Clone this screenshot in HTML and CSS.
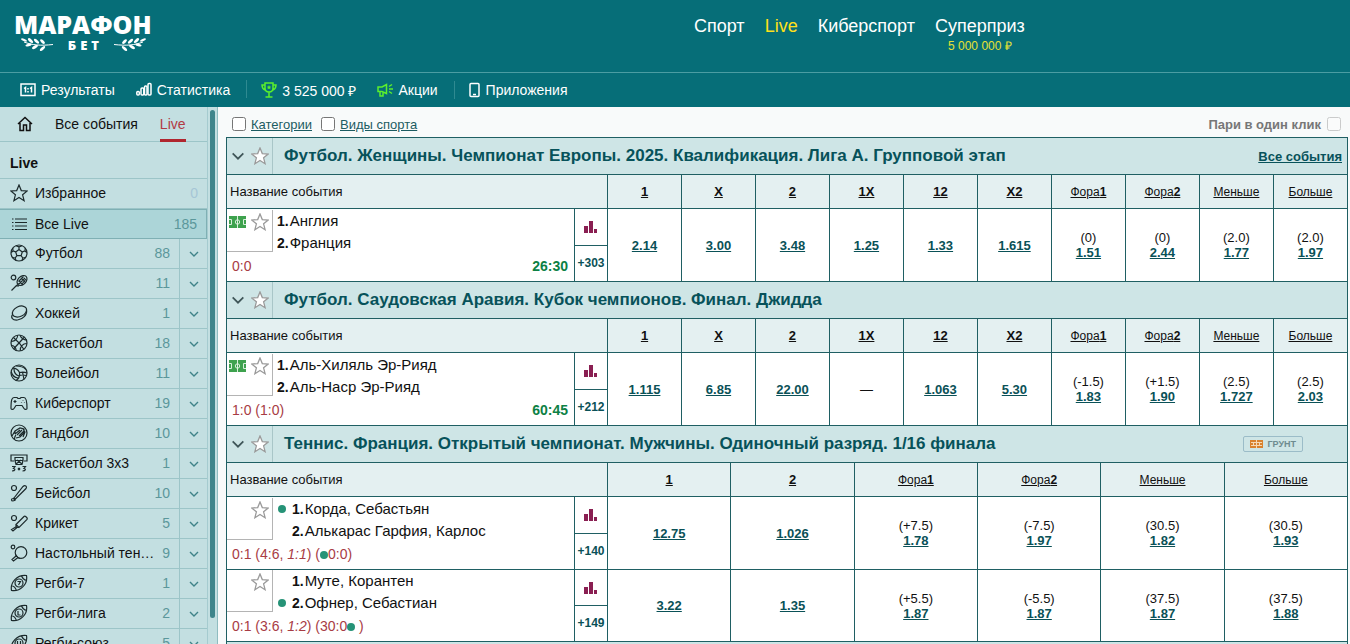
FILE: index.html
```html
<!DOCTYPE html>
<html lang="ru">
<head>
<meta charset="utf-8">
<title>Марафонбет — Live</title>
<link rel="stylesheet" href="styles.css">
</head>
<body>
<svg class="sprite" aria-hidden="true">
  <symbol id="chev" viewBox="0 0 12 12"><path d="M2 4l4 4 4-4"/></symbol>
  <symbol id="star" viewBox="0 0 18 18"><path d="M9 1l2.300 5.600 5.900.4-4.600 3.800 1.500 5.900L9 13.500l-5.100 3.200 1.500-5.900L.8 7l5.900-.4z"/></symbol>
  <symbol id="bars" viewBox="0 0 14 12"><path d="M0 5h4v7H0zM5 0h4v12H5zM10 8h3v4h-3z"/></symbol>
  <symbol id="pitch" viewBox="0 0 17 12"><path class="grass" d="M0 0h17v12H0z"/><path d="M8.500 0v12M0 3.500h2.500v5H0M17 3.500h-2.500v5H17"/><circle cx="8.500" cy="6" r="2.200"/></symbol>
  <symbol id="rugby" viewBox="0 0 18 18"><path d="M1.500 16.500C0 8.500 7 .5 16.500 1.500 18 10.500 10 18 1.500 16.500zM1.300 11.500c2.500.5 4.200 2 5.200 5.300M11.300 1.300c1 3 2.800 4.700 5.300 5.200"/><circle cx="9" cy="9" r="4"/></symbol>
  <symbol id="laurel" viewBox="0 0 32 14">
    <path class="stem" d="M3 4c8 3 16 4 29 2.500"/>
    <ellipse cx="3" cy="2" rx="3.200" ry="1.200" transform="rotate(25 3 2)"/>
    <ellipse cx="9.500" cy="2.600" rx="3.200" ry="1.400" transform="rotate(42 9.500 2.600)"/>
    <ellipse cx="15.500" cy="3.200" rx="3.200" ry="1.400" transform="rotate(42 15.500 3.200)"/>
    <ellipse cx="21.500" cy="3.600" rx="3" ry="1.400" transform="rotate(42 21.500 3.600)"/>
    <ellipse cx="7.500" cy="7" rx="3.200" ry="1.300" transform="rotate(-15 7.500 7)"/>
    <ellipse cx="14" cy="9" rx="3.300" ry="1.400" transform="rotate(-32 14 9)"/>
    <ellipse cx="21.500" cy="10.500" rx="3.300" ry="1.400" transform="rotate(-42 21.500 10.500)"/>
  </symbol>
</svg>

<header class="header">
  <div class="header-top">
    <a class="logo" href="#">
      <span class="logo-name">МАРАФОН</span>
      <span class="logo-row"><svg class="laurel"><use href="#laurel"/></svg><span class="logo-bet">БЕТ</span><svg class="laurel flip"><use href="#laurel"/></svg></span>
    </a>
    <nav class="nav">
      <a href="#">Спорт</a>
      <a class="current" href="#">Live</a>
      <a href="#">Киберспорт</a>
      <a class="prize" href="#">Суперприз<small>5 000 000 ₽</small></a>
    </nav>
  </div>
  <nav class="subnav">
    <a href="#"><svg class="ico" viewBox="0 0 16 16"><path d="M1 2h14v11.500H1zM4 6.500l1.500-1v5M10 6.500l1.500-1v5M8 6v1.500M8 9v1.500"/></svg>Результаты</a>
    <a href="#"><svg class="ico" viewBox="0 0 16 16"><rect x=".8" y="9.500" width="2.500" height="3.500" rx="1"/><rect x="5" y="6" width="2.800" height="7" rx="1"/><rect x="8.500" y="4" width="2.500" height="9" rx="1"/><rect x="12" y="1.500" width="3" height="11.500" rx="1"/></svg>Статистика</a>
    <a class="split green" href="#"><svg class="ico" viewBox="0 0 16 16"><path d="M4 1h8v5c0 3-2 4-4 4S4 9 4 6zM4 3H1c0 3 1 4 3 5M12 3h3c0 3-1 4-3 5M8 10v5M4.500 15h7"/><path class="solid" d="M8 3l.7 1.500 1.500.2-1.100 1 .3 1.600L8 6.500l-1.400.8.3-1.600-1.100-1 1.500-.2z"/></svg><span>3 525 000 ₽</span></a>
    <a class="green" href="#"><svg class="ico" viewBox="0 0 16 16"><path d="M1 5h4l4.500-2.500v9L5 9.500H1zM3 9.500V14h3V9.500M12 4.500l3-2M12 7h4M12 9.500l3 2"/></svg><span>Акции</span></a>
    <a class="split" href="#"><svg class="ico phone" viewBox="0 0 12 16"><rect x="1" y="1.500" width="9" height="13" rx="1"/><path d="M4 12.500h3"/></svg>Приложения</a>
  </nav>
</header>

<div class="body">
  <aside class="sidebar">
    <div class="side-main">
      <div class="tabs">
        <a class="home" href="#" aria-label="Главная"><svg viewBox="0 0 16 16"><path d="M1 8l7-6.500L15 8M3 7v7.500h3.500V9h3v5.500H13V7"/></svg></a>
        <a href="#">Все события</a>
        <a class="on" href="#">Live</a>
      </div>
      <h2 class="side-title">Live</h2>
      <ul class="sports">
        <li><a class="sport" href="#"><svg viewBox="0 0 18 18"><use href="#star"/></svg><span>Избранное</span><b class="zero">0</b></a></li>
        <li class="active"><a class="sport" href="#"><svg viewBox="0 0 18 18"><path d="M5 4h12M5 7.500h12M5 11h12M5 14.500h12M2 4h1.500M2 7.500h1.500M2 11h1.500M2 14.500h1.500"/></svg><span>Все Live</span><b>185</b></a></li>
        <li><a class="sport" href="#"><svg viewBox="0 0 18 18"><circle cx="9" cy="9" r="8"/><path d="M9 5.500l3.300 2.400-1.200 3.800H6.900L5.700 7.900zM9 5.500V3L6 1.600M9 3l3-1.400M12.300 7.900L15 7l1.800 1.500M15 7l.3-3M11.100 11.700l1.700 2.300-.7 2.200M12.800 14l2.600-.5M6.900 11.700L5.200 14l.7 2.200M5.200 14l-2.600-.5M5.700 7.900L3 7 1.200 8.500M3 7l-.3-3"/></svg><span>Футбол</span><b>88</b></a><button aria-label="Раскрыть"><svg><use href="#chev"/></svg></button></li>
        <li><a class="sport" href="#"><svg viewBox="0 0 18 18"><circle cx="3.500" cy="3.500" r="2.300"/><ellipse cx="12" cy="6.500" rx="5.800" ry="4" transform="rotate(-45 12 6.500)"/><path d="M8 9v3M6 12h3M7 11l-5.500 5.500M9 7l4 4M11 4l4 4M9 10l6-6M12 10l4-5M8.500 7.500l5-5"/></svg><span>Теннис</span><b>11</b></a><button aria-label="Раскрыть"><svg><use href="#chev"/></svg></button></li>
        <li><a class="sport" href="#"><svg viewBox="0 0 18 18"><ellipse cx="9.500" cy="7.500" rx="7.500" ry="5" transform="rotate(-25 9.500 7.500)"/><path d="M2.500 10.500c-2 3 0 6 5 5.500 5-.5 10-5 9-10.500"/></svg><span>Хоккей</span><b>1</b></a><button aria-label="Раскрыть"><svg><use href="#chev"/></svg></button></li>
        <li><a class="sport" href="#"><svg viewBox="0 0 18 18"><circle cx="9" cy="9" r="8"/><path d="M3.500 15L14.500 3M3.500 3.500c3 2.500 8 8 10.500 12M7.500 1.200c.5 3-2 6-6.300 6.300M16.800 9.500c-4 0-7 3-6.500 7.300M10 1.200c1 2.500 3.500 4.500 7 5M1.300 11.500c2.500 0 4.500 2 5 5"/></svg><span>Баскетбол</span><b>18</b></a><button aria-label="Раскрыть"><svg><use href="#chev"/></svg></button></li>
        <li><a class="sport" href="#"><svg viewBox="0 0 18 18"><circle cx="9" cy="9" r="8"/><path d="M9.500 8.500C8 5.500 5.500 4.200 2.800 4.200M9.500 8.500c3-.8 5.500-.5 7.500.5M9.500 8.500c.5 3.500-1 6.500-3.500 8M6 2c4 0 8 1.500 10 3.500M1.300 8c1 3.500 3.500 5.500 6.700 6M4 5c0 3.500 1.800 6 5 7M9.300 11.500c2.500-.8 5-.5 7 0M12.500 8l1.500 7.500"/></svg><span>Волейбол</span><b>11</b></a><button aria-label="Раскрыть"><svg><use href="#chev"/></svg></button></li>
        <li><a class="sport" href="#"><svg viewBox="0 0 18 18"><path d="M4 3.500h3l1 1h2l1-1h3c2 0 3 2 3 11 0 1-2 1.500-3 0l-2-3H6l-2 3c-1 1.500-3 1-3 0 0-9 1-11 3-11zM5 6v3M3.500 7.500h3M13 6v.5M11.500 8v.5M14.500 8v.5"/></svg><span>Киберспорт</span><b>19</b></a><button aria-label="Раскрыть"><svg><use href="#chev"/></svg></button></li>
        <li><a class="sport" href="#"><svg viewBox="0 0 18 18"><circle cx="9" cy="9" r="8"/><path d="M2 12l3-5 5-3 4 1v4L10 13l-4 1M5 10l5-4M7 11l5-5M9 12l5-5M5 7v3M4.500 15c0-2 .5-3 1.500-4M13 5l2 3-2 5"/></svg><span>Гандбол</span><b>10</b></a><button aria-label="Раскрыть"><svg><use href="#chev"/></svg></button></li>
        <li><a class="sport" href="#"><svg viewBox="0 0 18 18"><path d="M4 7H1V1h16v6h-3M5 3.500h8v3H5zM5 6.500l1 4h6l1-4M6 10l5-4M12 10L7 6M2 12.500h3l-1.500 2c2 0 2 2.500-1.500 2.500M12.500 12.500h3l-1.500 2c2 0 2 2.500-1.500 2.500M8 14l2 2M10 14l-2 2"/></svg><span>Баскетбол 3x3</span><b>1</b></a><button aria-label="Раскрыть"><svg><use href="#chev"/></svg></button></li>
        <li><a class="sport" href="#"><svg viewBox="0 0 18 18"><circle cx="4" cy="4" r="2.500"/><path d="M4 14L13 2.500c2-2 4.500 0 3 2L5.500 15zM3 14l2.500 2.500M3 14.500c-2 0-2 2.500 0 2.500 1 0 1.500-.5 1.500-1.500"/></svg><span>Бейсбол</span><b>10</b></a><button aria-label="Раскрыть"><svg><use href="#chev"/></svg></button></li>
        <li><a class="sport" href="#"><svg viewBox="0 0 18 18"><circle cx="4" cy="4" r="2.500"/><path d="M6 10.500l8-8c1-1 4 1.500 3 2.800l-8 8.200zM6 10.500v2l1 1h2M6.500 12.500l-5 3 1.500 1.500 4-3.500"/></svg><span>Крикет</span><b>5</b></a><button aria-label="Раскрыть"><svg><use href="#chev"/></svg></button></li>
        <li><a class="sport" href="#"><svg viewBox="0 0 18 18"><circle cx="3" cy="3" r="1.800"/><circle cx="11" cy="8.500" r="5.800"/><path d="M5.500 10.500c1 2 2.500 3.500 4.500 4M6 12l-4 3.500L3.500 17l4.500-3.500"/></svg><span>Настольный тен…</span><b>9</b></a><button aria-label="Раскрыть"><svg><use href="#chev"/></svg></button></li>
        <li><a class="sport" href="#"><svg viewBox="0 0 18 18"><use href="#rugby"/><path d="M7.500 7.500h3l-2 3.500"/></svg><span>Регби-7</span><b>1</b></a><button aria-label="Раскрыть"><svg><use href="#chev"/></svg></button></li>
        <li><a class="sport" href="#"><svg viewBox="0 0 18 18"><use href="#rugby"/><path d="M8 7v4h2.500"/></svg><span>Регби-лига</span><b>2</b></a><button aria-label="Раскрыть"><svg><use href="#chev"/></svg></button></li>
        <li><a class="sport" href="#"><svg viewBox="0 0 18 18"><use href="#rugby"/><path d="M7.500 7v3l1.500 1 1.500-1V7"/></svg><span>Регби-союз</span><b>5</b></a><button aria-label="Раскрыть"><svg><use href="#chev"/></svg></button></li>
      </ul>
    </div>
    <div class="track"><div class="thumb"></div></div>
  </aside>

  <main class="main">
    <div class="filters">
      <input type="checkbox" id="f-cat"><label for="f-cat">Категории</label>
      <input type="checkbox" id="f-kind"><label for="f-kind">Виды спорта</label>
      <label class="oneclick" for="f-one">Пари в один клик</label><input class="dim" type="checkbox" id="f-one">
    </div>

    <section class="group">
      <div class="group-head">
        <div class="group-tools"><svg class="fold"><use href="#chev"/></svg><svg class="fav"><use href="#star"/></svg></div>
        <h3>Футбол. Женщины. Чемпионат Европы. 2025. Квалификация. Лига А. Групповой этап</h3>
        <a class="all" href="#">Все события</a>
      </div>
      <table>
        <colgroup><col class="c-name"><col class="c-stat"><col span="10"></colgroup>
        <tr><th class="left" colspan="2">Название события</th><th><b>1</b></th><th><b>X</b></th><th><b>2</b></th><th><b>1X</b></th><th><b>12</b></th><th><b>X2</b></th><th><u>Фора<b>1</b></u></th><th><u>Фора<b>2</b></u></th><th><u>Меньше</u></th><th><u>Больше</u></th></tr>
        <tr>
          <td><div class="event"><div class="mark"><svg class="pitch"><use href="#pitch"/></svg><svg class="fav"><use href="#star"/></svg></div><div class="teams"><div><b>1.</b>Англия</div><div><b>2.</b>Франция</div></div><div class="score"><span>0:0</span><time>26:30</time></div></div></td>
          <td><div class="stat"><a href="#" aria-label="Статистика"><svg><use href="#bars"/></svg></a><a href="#">+303</a></div></td>
          <td><a href="#">2.14</a></td><td><a href="#">3.00</a></td><td><a href="#">3.48</a></td><td><a href="#">1.25</a></td><td><a href="#">1.33</a></td><td><a href="#">1.615</a></td><td>(0)<br><a href="#">1.51</a></td><td>(0)<br><a href="#">2.44</a></td><td>(2.0)<br><a href="#">1.77</a></td><td>(2.0)<br><a href="#">1.97</a></td>
        </tr>
      </table>
    </section>

    <section class="group">
      <div class="group-head">
        <div class="group-tools"><svg class="fold"><use href="#chev"/></svg><svg class="fav"><use href="#star"/></svg></div>
        <h3>Футбол. Саудовская Аравия. Кубок чемпионов. Финал. Джидда</h3>
      </div>
      <table>
        <colgroup><col class="c-name"><col class="c-stat"><col span="10"></colgroup>
        <tr><th class="left" colspan="2">Название события</th><th><b>1</b></th><th><b>X</b></th><th><b>2</b></th><th><b>1X</b></th><th><b>12</b></th><th><b>X2</b></th><th><u>Фора<b>1</b></u></th><th><u>Фора<b>2</b></u></th><th><u>Меньше</u></th><th><u>Больше</u></th></tr>
        <tr>
          <td><div class="event"><div class="mark"><svg class="pitch"><use href="#pitch"/></svg><svg class="fav"><use href="#star"/></svg></div><div class="teams"><div><b>1.</b>Аль-Хиляль Эр-Рияд</div><div><b>2.</b>Аль-Наср Эр-Рияд</div></div><div class="score"><span>1:0 (1:0)</span><time>60:45</time></div></div></td>
          <td><div class="stat"><a href="#" aria-label="Статистика"><svg><use href="#bars"/></svg></a><a href="#">+212</a></div></td>
          <td><a href="#">1.115</a></td><td><a href="#">6.85</a></td><td><a href="#">22.00</a></td><td>—</td><td><a href="#">1.063</a></td><td><a href="#">5.30</a></td><td>(-1.5)<br><a href="#">1.83</a></td><td>(+1.5)<br><a href="#">1.90</a></td><td>(2.5)<br><a href="#">1.727</a></td><td>(2.5)<br><a href="#">2.03</a></td>
        </tr>
      </table>
    </section>

    <section class="group">
      <div class="group-head">
        <div class="group-tools"><svg class="fold"><use href="#chev"/></svg><svg class="fav"><use href="#star"/></svg></div>
        <h3>Теннис. Франция. Открытый чемпионат. Мужчины. Одиночный разряд. 1/16 финала</h3>
        <span class="surface"><svg viewBox="0 0 13 8"><path class="clay" d="M0 0h13v8H0z"/><path d="M1 2.500h11M1 5.500h11M6.500 0v8M3.500 2.500v3M9.500 2.500v3"/></svg>ГРУНТ</span>
      </div>
      <table>
        <colgroup><col class="c-name"><col class="c-stat"><col span="6"></colgroup>
        <tr><th class="left" colspan="2">Название события</th><th><b>1</b></th><th><b>2</b></th><th><u>Фора<b>1</b></u></th><th><u>Фора<b>2</b></u></th><th><u>Меньше</u></th><th><u>Больше</u></th></tr>
        <tr>
          <td><div class="event"><div class="mark"><svg class="fav"><use href="#star"/></svg></div><div class="teams serve"><div><i class="dot"></i><b>1.</b>Корда, Себастьян</div><div><i class="dot off"></i><b>2.</b>Алькарас Гарфия, Карлос</div></div><div class="score"><span>0:1 (4:6, <em>1:1</em>) (<i class="dot"></i>0:0)</span></div></div></td>
          <td><div class="stat"><a href="#" aria-label="Статистика"><svg><use href="#bars"/></svg></a><a href="#">+140</a></div></td>
          <td><a href="#">12.75</a></td><td><a href="#">1.026</a></td><td>(+7.5)<br><a href="#">1.78</a></td><td>(-7.5)<br><a href="#">1.97</a></td><td>(30.5)<br><a href="#">1.82</a></td><td>(30.5)<br><a href="#">1.93</a></td>
        </tr>
        <tr>
          <td><div class="event"><div class="mark"><svg class="fav"><use href="#star"/></svg></div><div class="teams serve"><div><i class="dot off"></i><b>1.</b>Муте, Корантен</div><div><i class="dot"></i><b>2.</b>Офнер, Себастиан</div></div><div class="score"><span>0:1 (3:6, <em>1:2</em>) (30:0<i class="dot"></i> )</span></div></div></td>
          <td><div class="stat"><a href="#" aria-label="Статистика"><svg><use href="#bars"/></svg></a><a href="#">+149</a></div></td>
          <td><a href="#">3.22</a></td><td><a href="#">1.35</a></td><td>(+5.5)<br><a href="#">1.87</a></td><td>(-5.5)<br><a href="#">1.87</a></td><td>(37.5)<br><a href="#">1.87</a></td><td>(37.5)<br><a href="#">1.88</a></td>
        </tr>
      </table>
    </section>
    <section class="group"><div class="group-head"></div></section>
  </main>
</div>
</body>
</html>
```
FILE: styles.css
```css
* { box-sizing: border-box; }
body {
  margin: 0;
  height: 100vh;
  display: flex;
  flex-direction: column;
  overflow: hidden;
  font-family: "Liberation Sans", Arial, sans-serif;
  font-size: 14px;
  color: #111;
  background: #f8fafa;
}
a { color: inherit; text-decoration: none; }
svg { fill: none; stroke: currentColor; flex: none; }
h2, h3, ul { margin: 0; padding: 0; }
.sprite { display: none; }

/* header */
.header { flex: none; background: #066e78; color: #fff; }
.header-top {
  display: grid;
  grid-template-columns: 680px 1fr;
  height: 73px;
  padding-left: 14px;
  border-bottom: 1px solid #4b9da3;
}
.logo { justify-self: start; padding-top: 11px; }
.logo-name {
  display: block;
  font: 800 25px/26px "Open Sans", sans-serif;
}
.logo-row { display: flex; align-items: center; justify-content: space-between; padding: 0 6px 0 7px; }
.logo-bet { padding-left: 4px; font: 800 13px/16px "Open Sans", sans-serif; letter-spacing: 4px; }
.laurel { width: 32px; height: 14px; fill: #fff; stroke: none; }
.stem { fill: none; stroke: #fff; stroke-width: 1; }
.flip { transform: scaleX(-1); }
.nav { display: flex; gap: 20px; padding-top: 15px; font-size: 18px; line-height: 22px; }
.nav .current { color: #ffe01a; }
.prize { text-align: center; }
.prize small { display: block; font-size: 12px; line-height: 18px; color: #e6e234; }

.subnav { display: flex; align-items: center; height: 34px; padding-left: 20px; }
.subnav a { display: flex; align-items: center; gap: 5px; margin-right: 21px; }
.subnav .split { position: relative; margin-left: 10px; }
.subnav .split::before { content: ""; position: absolute; left: -15px; top: -1px; width: 1px; height: 18px; background: #2f8a91; }
.ico { width: 16px; height: 16px; stroke-width: 1.5; }
.ico.phone { width: 12px; }
.green .ico { color: #5bf02c; }
.solid { fill: currentColor; stroke: none; }

/* layout */
.body { flex: 1; display: flex; min-height: 0; }
.sidebar { display: flex; flex: none; width: 218px; background: #c3dfe1; border-right: 1px solid #8fbcc0; overflow: hidden; }
.side-main { width: 208px; border-right: 1px solid #a5cbcf; }
.track { flex: 1; padding: 3px 2px 0; }
.thumb { width: 5px; height: 508px; border-radius: 3px; background: #3f858b; }

.tabs { display: flex; height: 35px; padding-left: 17px; border-bottom: 1px solid #9cc5c8; line-height: 34px; white-space: nowrap; }
.tabs a { margin-right: 22px; }
.tabs .home { display: flex; align-items: center; }
.tabs .home svg { width: 16px; height: 16px; stroke-width: 1.5; }
.tabs .on { height: 35px; margin-right: 0; color: #b23a44; border-bottom: 3px solid #b0262f; }
.side-title { height: 37px; padding-left: 10px; font-size: 14px; line-height: 42px; border-bottom: 1px solid #9cc5c8; }
.sports { list-style: none; }
.sports li { display: flex; height: 30px; border-bottom: 1px solid #9cc5c8; }
.sports .active { background: #acd5d8; border: 1px solid #7fb0b4; border-left: 0; }
.sport { flex: 1; min-width: 0; display: flex; align-items: center; gap: 7px; padding: 0 9px 1px 10px; }
.sport svg { width: 18px; height: 18px; color: #1c2a2c; stroke-width: 1.2; }
.sport span { flex: 1; white-space: nowrap; }
.sport b { font-weight: normal; color: #5b979b; }
.sport .zero { color: #a6c6d6; }
.sports button { width: 28px; padding: 0; border: 0; border-left: 1px solid #9cc5c8; background: none; color: #3f8388; }
.sports button svg { display: block; width: 12px; height: 12px; margin: auto; stroke-width: 1.4; }

/* main */
.main { flex: 1; min-width: 0; padding: 0 2px 0 8px; overflow: hidden; }
.filters { display: flex; align-items: center; height: 30px; padding: 4px 4px 0 6px; font-size: 13px; color: #1c5c62; }
.filters label { text-decoration: underline; margin-right: 9px; }
.filters input { width: 14px; height: 14px; margin: 0 5px 0 0; }
.filters .oneclick { margin: 0 6px 0 auto; text-decoration: none; font-weight: bold; color: #777; }
.filters .dim { opacity: .35; margin: 0 3px 0 0; }

.group { border-left: 1px solid #1f5f63; }
.group-head {
  display: flex;
  align-items: center;
  height: 37px;
  background: #cee5e6;
  border-top: 1px solid #1f5f63;
  border-right: 1px solid #1f5f63;
  color: #07525a;
}
.group-tools { align-self: stretch; display: flex; align-items: center; gap: 5px; width: 46px; padding-left: 3px; border-right: 1px solid #a9c6c8; }
.fold { width: 16px; height: 16px; color: #3f5558; stroke-width: 1.3; }
.fav { width: 18px; height: 18px; color: #9a9a9a; fill: #fff; stroke-width: 1.3; }
.group h3 { flex: 1; padding-left: 11px; font-size: 17px; line-height: 20px; }
.all { padding-right: 5px; font-size: 13px; font-weight: bold; text-decoration: underline; }
.surface { display: flex; align-items: center; gap: 4px; height: 16px; margin-right: 44px; padding: 0 6px; border: 1px solid #9bbcc8; border-radius: 2px; font: bold 9px "Liberation Sans", sans-serif; color: #6f8b90; }
.surface svg { width: 13px; height: 8px; stroke: #f5d9b5; stroke-width: 1; }
.clay { fill: #d9822f; stroke: none; }

table { width: 100%; table-layout: fixed; border-collapse: separate; border-spacing: 0; border-top: 1px solid #1f5f63; }
.c-name { width: 348px; }
.c-stat { width: 33px; }
th, td { padding: 0; text-align: center; border-right: 1px solid #1f5f63; font-size: 13px; line-height: 15px; }
th { height: 34px; background: #e4f0f1; border-bottom: 1px solid #1f5f63; font-weight: normal; }
th > b { text-decoration: underline; }
th > u { font-size: 12px; }
.left { text-align: left; padding-left: 3px; }
td { height: 72px; background: #fff; }
tr + tr + tr td { border-top: 1px solid #1f5f63; }
td > a { font-weight: bold; text-decoration: underline; color: #0a5157; }
.event { display: grid; grid-template-columns: 46px 1fr; grid-template-rows: 42px 29px; text-align: left; }
.mark { display: flex; justify-content: flex-end; gap: 5px; padding: 3px 3px; border-right: 1px solid #b4b4b4; border-bottom: 1px solid #b4b4b4; }
.pitch { width: 17px; height: 12px; margin-top: 3px; stroke: #d9f0dc; }
.grass { fill: #3ea24e; stroke: none; }
.teams { padding-left: 4px; font-size: 15px; line-height: 21px; }
.teams b { margin-right: 1px; font-size: 14px; }
.dot { display: inline-block; width: 8px; height: 8px; border-radius: 50%; background: #269377; }
.serve .dot { margin: 0 6px 1px 1px; }
.off { visibility: hidden; }
.score { grid-column: 1 / 3; display: flex; justify-content: space-between; padding: 0 6px 0 5px; line-height: 29px; font-size: 14px; color: #a83c44; }
.score time { font-weight: bold; color: #0d8145; }
.stat { display: flex; flex-direction: column; height: 71px; }
.stat a { flex: 1; display: flex; align-items: center; justify-content: center; font-size: 12px; font-weight: bold; color: #0a5157; }
.stat a + a { border-top: 1px solid #1f5f63; }
.stat svg { width: 14px; height: 12px; fill: #8a1f52; stroke: none; }
```
